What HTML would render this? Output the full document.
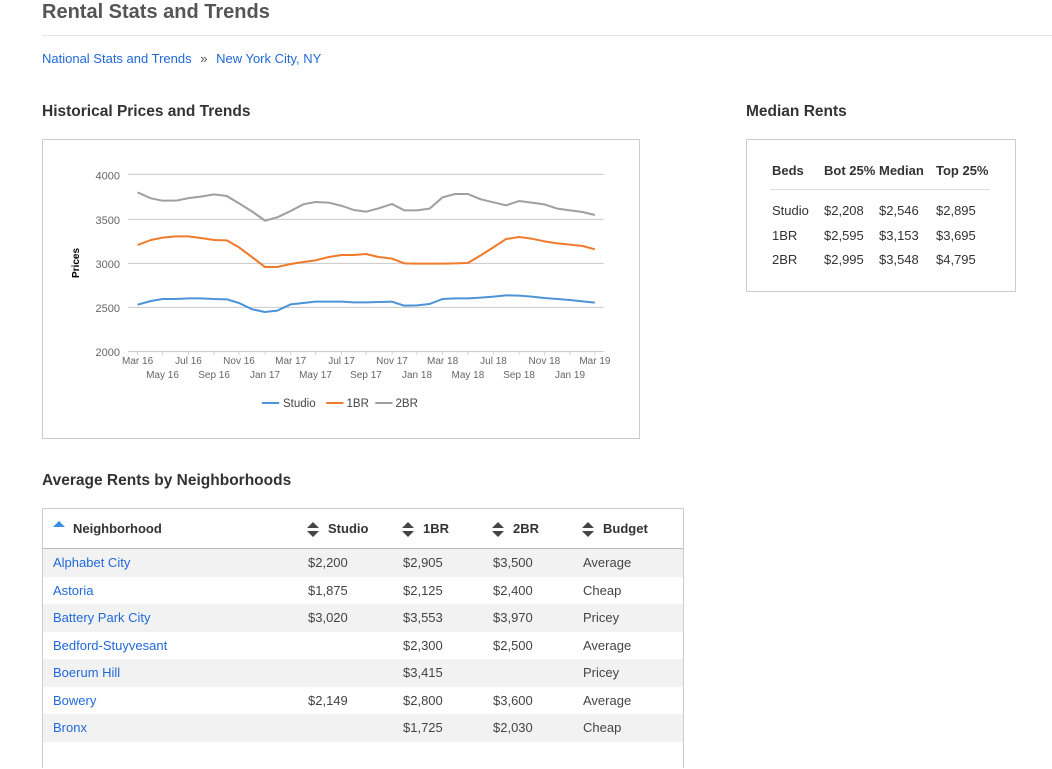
<!DOCTYPE html>
<html><head><meta charset="utf-8"><style>
*{margin:0;padding:0;box-sizing:border-box}
body{width:1052px;height:748px;overflow:hidden;background:#fff;font-family:"Liberation Sans",sans-serif;color:#333;position:relative}
.a{position:absolute;white-space:nowrap}
h1{position:absolute;left:42px;top:1px;font-size:20px;color:#555;font-weight:bold}
h2{position:absolute;font-size:15.5px;font-weight:bold;color:#333}
.lnk{color:#2169d9}
.box{position:absolute;border:1px solid #ccc}
.r{height:27.5px;line-height:27.5px;position:relative}
.r span{position:absolute}
.r:nth-child(odd){background:#f2f2f2}
</style></head><body>
<h1>Rental Stats and Trends</h1>
<div class="a" style="left:42px;top:35px;width:1010px;border-top:1px solid #e5e5e5"></div>
<div class="a" style="left:42px;top:51px;font-size:13px"><span class="lnk">National Stats and Trends</span> <span style="color:#555;margin:0 5px">»</span> <span class="lnk">New York City, NY</span></div>
<h2 style="left:42px;top:103px">Historical Prices and Trends</h2>
<h2 style="left:746px;top:103px">Median Rents</h2>
<div class="box" style="left:42px;top:139px;width:598px;height:300px"></div>
<svg class="a" style="left:40px;top:140px" width="600" height="300" viewBox="0 0 1568 900" preserveAspectRatio="none">
<g stroke="#c8c8c8" stroke-width="3"><line x1="230" y1="103" x2="1473" y2="103"/><line x1="230" y1="238" x2="1473" y2="238"/><line x1="230" y1="370" x2="1473" y2="370"/><line x1="230" y1="502" x2="1473" y2="502"/><line x1="230" y1="635" x2="1473" y2="635"/>
<g stroke-width="2"><line x1="255" y1="635" x2="255" y2="645"/><line x1="320" y1="635" x2="320" y2="645"/><line x1="388" y1="635" x2="388" y2="645"/><line x1="455" y1="635" x2="455" y2="645"/><line x1="520" y1="635" x2="520" y2="645"/><line x1="588" y1="635" x2="588" y2="645"/><line x1="655" y1="635" x2="655" y2="645"/><line x1="720" y1="635" x2="720" y2="645"/><line x1="788" y1="635" x2="788" y2="645"/><line x1="852" y1="635" x2="852" y2="645"/><line x1="920" y1="635" x2="920" y2="645"/><line x1="985" y1="635" x2="985" y2="645"/><line x1="1052" y1="635" x2="1052" y2="645"/><line x1="1118" y1="635" x2="1118" y2="645"/><line x1="1185" y1="635" x2="1185" y2="645"/><line x1="1252" y1="635" x2="1252" y2="645"/><line x1="1318" y1="635" x2="1318" y2="645"/><line x1="1385" y1="635" x2="1385" y2="645"/><line x1="1450" y1="635" x2="1450" y2="645"/></g></g>
<g fill="none" stroke-width="6" stroke-linejoin="round">
<polyline stroke="#a0a0a0" points="255,157 290,175 320,182 355,182 390,174 420,170 455,163 488,168 520,190 555,215 588,242 620,232 655,213 688,193 720,186 755,188 790,198 820,210 852,215 885,205 920,192 952,211 985,211 1018,206 1052,172 1085,162 1118,162 1152,178 1185,187 1218,196 1252,183 1285,188 1318,193 1352,206 1385,211 1418,216 1450,225"/>
<polyline stroke="#f07b2c" points="255,315 290,300 320,293 355,289 388,289 420,294 455,300 488,301 520,322 555,352 588,381 620,381 655,372 688,366 720,361 755,351 788,345 820,345 852,342 885,351 920,356 952,370 985,371 1018,371 1052,371 1085,370 1118,369 1152,346 1185,322 1218,297 1252,291 1285,296 1318,304 1352,310 1385,314 1418,318 1450,328"/>
<polyline stroke="#4e94d8" points="255,494 290,483 320,477 355,477 388,475 420,475 455,477 488,478 520,489 555,508 588,516 620,512 655,493 688,489 720,485 755,485 788,485 820,487 852,487 885,486 920,485 952,497 985,496 1018,492 1052,477 1085,475 1118,475 1152,473 1185,470 1218,466 1252,467 1285,470 1318,474 1352,477 1385,480 1418,484 1450,488"/>
<line x1="580" y1="789" x2="625" y2="789" stroke="#4e94d8"/><line x1="748" y1="789" x2="793" y2="789" stroke="#f07b2c"/><line x1="876" y1="789" x2="921" y2="789" stroke="#a0a0a0"/></g>
</svg>
<svg class="a" style="left:40px;top:140px" width="600" height="300" font-family="Liberation Sans, sans-serif">
<g font-size="11" fill="#666" text-anchor="end"><text x="80" y="39.5">4000</text><text x="80" y="84">3500</text><text x="80" y="128">3000</text><text x="80" y="172">2500</text><text x="80" y="216">2000</text></g>
<text transform="translate(39,123) rotate(-90)" font-size="10" font-weight="bold" text-anchor="middle" fill="#000">Prices</text>
<g font-size="10" fill="#666" text-anchor="middle"><text x="97.6" y="224">Mar 16</text><text x="148.5" y="224">Jul 16</text><text x="199" y="224">Nov 16</text><text x="250.7" y="224">Mar 17</text><text x="301.6" y="224">Jul 17</text><text x="352" y="224">Nov 17</text><text x="402.6" y="224">Mar 18</text><text x="453.5" y="224">Jul 18</text><text x="504.4" y="224">Nov 18</text><text x="554.9" y="224">Mar 19</text>
<text x="122.5" y="238">May 16</text><text x="174.1" y="238">Sep 16</text><text x="225" y="238">Jan 17</text><text x="275.5" y="238">May 17</text><text x="326" y="238">Sep 17</text><text x="377" y="238">Jan 18</text><text x="427.9" y="238">May 18</text><text x="479.1" y="238">Sep 18</text><text x="530" y="238">Jan 19</text></g>
<g font-size="11.5" fill="#444"><text x="243" y="267">Studio</text><text x="306.5" y="267">1BR</text><text x="355.5" y="267">2BR</text></g>
</svg>
<div class="box" style="left:746px;top:139px;width:270px;height:153px"></div>
<div class="a" style="left:772px;top:163px;font-size:13px;font-weight:bold">Beds</div>
<div class="a" style="left:824px;top:163px;font-size:13px;font-weight:bold">Bot 25%</div>
<div class="a" style="left:879px;top:163px;font-size:13px;font-weight:bold">Median</div>
<div class="a" style="left:936px;top:163px;font-size:13px;font-weight:bold">Top 25%</div>
<div class="a" style="left:770px;top:189px;width:220px;border-top:1px solid #ddd"></div>
<div class="a" style="left:772px;top:199px;font-size:13px;line-height:24.5px">Studio<br>1BR<br>2BR</div>
<div class="a" style="left:824px;top:199px;font-size:13px;line-height:24.5px">$2,208<br>$2,595<br>$2,995</div>
<div class="a" style="left:879px;top:199px;font-size:13px;line-height:24.5px">$2,546<br>$3,153<br>$3,548</div>
<div class="a" style="left:936px;top:199px;font-size:13px;line-height:24.5px">$2,895<br>$3,695<br>$4,795</div>
<h2 style="left:42px;top:472px">Average Rents by Neighborhoods</h2>
<div class="box" style="left:42px;top:508px;width:642px;height:260px;border-bottom:none"></div>
<div class="a" style="left:43px;top:548px;width:640px;border-top:1px solid #bbb"></div>
<div class="a" style="left:53px;top:521px;width:0;height:0;border-left:6px solid transparent;border-right:6px solid transparent;border-bottom:6px solid #3a8fe0"></div>
<div class="a" style="left:73px;top:521px;font-size:13px;font-weight:bold">Neighborhood</div>
<svg class="a" style="left:307px;top:522px" width="400" height="16"><g fill="#444"><path d="M0 6 L6 0 L12 6Z M0 9 L12 9 L6 15Z"/><path transform="translate(95,0)" d="M0 6 L6 0 L12 6Z M0 9 L12 9 L6 15Z"/><path transform="translate(185,0)" d="M0 6 L6 0 L12 6Z M0 9 L12 9 L6 15Z"/><path transform="translate(275,0)" d="M0 6 L6 0 L12 6Z M0 9 L12 9 L6 15Z"/></g></svg>
<div class="a" style="left:328px;top:521px;font-size:13px;font-weight:bold">Studio</div>
<div class="a" style="left:423px;top:521px;font-size:13px;font-weight:bold">1BR</div>
<div class="a" style="left:513px;top:521px;font-size:13px;font-weight:bold">2BR</div>
<div class="a" style="left:603px;top:521px;font-size:13px;font-weight:bold">Budget</div>
<div class="a" style="left:43px;top:549px;width:640px;font-size:13px;color:#444">
<div class="r"><span class="lnk" style="left:10px">Alphabet City</span><span style="left:265px">$2,200</span><span style="left:360px">$2,905</span><span style="left:450px">$3,500</span><span style="left:540px">Average</span></div>
<div class="r"><span class="lnk" style="left:10px">Astoria</span><span style="left:265px">$1,875</span><span style="left:360px">$2,125</span><span style="left:450px">$2,400</span><span style="left:540px">Cheap</span></div>
<div class="r"><span class="lnk" style="left:10px">Battery Park City</span><span style="left:265px">$3,020</span><span style="left:360px">$3,553</span><span style="left:450px">$3,970</span><span style="left:540px">Pricey</span></div>
<div class="r"><span class="lnk" style="left:10px">Bedford-Stuyvesant</span><span style="left:360px">$2,300</span><span style="left:450px">$2,500</span><span style="left:540px">Average</span></div>
<div class="r"><span class="lnk" style="left:10px">Boerum Hill</span><span style="left:360px">$3,415</span><span style="left:540px">Pricey</span></div>
<div class="r"><span class="lnk" style="left:10px">Bowery</span><span style="left:265px">$2,149</span><span style="left:360px">$2,800</span><span style="left:450px">$3,600</span><span style="left:540px">Average</span></div>
<div class="r"><span class="lnk" style="left:10px">Bronx</span><span style="left:360px">$1,725</span><span style="left:450px">$2,030</span><span style="left:540px">Cheap</span></div>
<div class="r"></div>
</div>
</body></html>
